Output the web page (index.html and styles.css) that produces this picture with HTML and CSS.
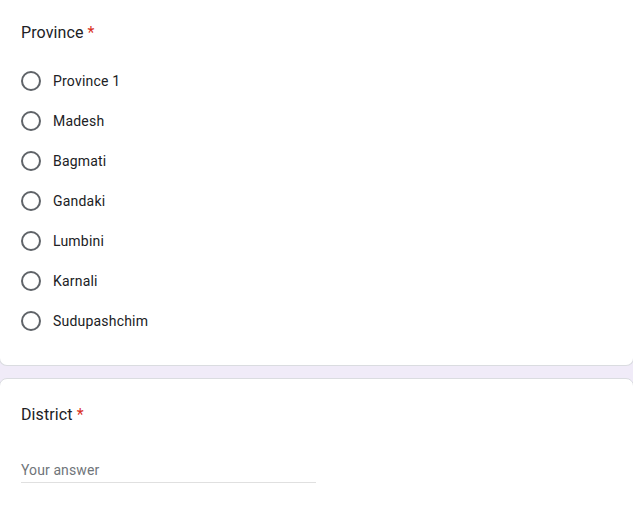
FILE: index.html
```html
<!DOCTYPE html>
<html>
<head>
<meta charset="utf-8">
<link rel="stylesheet" href="styles.css">
</head>
<body>
<div class="page">
  <section class="card card-first">
    <div class="q-title">Province <span class="req">*</span></div>
    <div class="options">
      <label class="opt"><span class="radio"></span><span class="opt-label">Province 1</span></label>
      <label class="opt"><span class="radio"></span><span class="opt-label">Madesh</span></label>
      <label class="opt"><span class="radio"></span><span class="opt-label">Bagmati</span></label>
      <label class="opt"><span class="radio"></span><span class="opt-label">Gandaki</span></label>
      <label class="opt"><span class="radio"></span><span class="opt-label">Lumbini</span></label>
      <label class="opt"><span class="radio"></span><span class="opt-label">Karnali</span></label>
      <label class="opt"><span class="radio"></span><span class="opt-label">Sudupashchim</span></label>
    </div>
  </section>
  <section class="card card-second">
    <div class="q-title">District <span class="req">*</span></div>
    <div class="answer"><span class="placeholder">Your answer</span></div>
  </section>
</div>
</body>
</html>
```
FILE: styles.css
```css
html, body {
  margin: 0;
  padding: 0;
  background: #f0ebf8;
  height: 100%;
  overflow: hidden;
}
body {
  font-family: Roboto, "Liberation Sans", Arial, sans-serif;
  color: #202124;
}
.page {
  display: flex;
  flex-direction: column;
  gap: 12px;
  margin: 0 -1px;
}
.card {
  background: #fff;
  border: 1px solid #dadce0;
  border-radius: 8px;
  padding: 0 21px;
}
.card-first {
  border-top: none;
  border-top-left-radius: 0;
  border-top-right-radius: 0;
  padding-top: 21px;
  padding-bottom: 24px;
}
.card-second {
  padding-top: 24px;
  padding-bottom: 40px;
}
.q-title {
  font-size: 16px;
  line-height: 24px;
  letter-spacing: 0.1px;
}
.req {
  color: #d93025;
}
.options {
  display: flex;
  flex-direction: column;
  margin-top: 16px;
}
.opt {
  display: flex;
  align-items: center;
  gap: 12px;
  height: 40px;
}
.radio {
  width: 20px;
  height: 20px;
  box-sizing: border-box;
  border: 2px solid #5f6368;
  border-radius: 50%;
  flex: none;
}
.opt-label {
  font-size: 14px;
  letter-spacing: 0.2px;
}
.answer {
  margin-top: 31px;
  width: 295px;
  height: 24px;
  border-bottom: 1px solid #e0e0e0;
  display: flex;
  align-items: center;
}
.placeholder {
  font-size: 14px;
  color: #70757a;
  letter-spacing: 0.1px;
}
```
